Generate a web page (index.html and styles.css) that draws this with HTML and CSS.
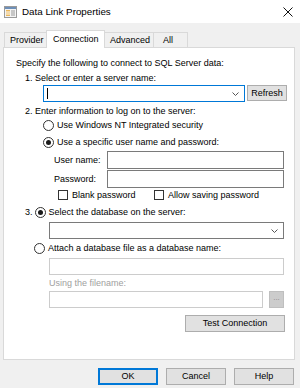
FILE: index.html
```html
<!doctype html>
<html lang="en">
  <head>
    <meta charset="UTF-8" />
    <meta name="viewport" content="width=device-width, initial-scale=1.0" />
    <title>Data Link Properties</title>
    <link rel="stylesheet" href="styles.css">
  </head>
  <body>
    <!-- Title bar -->
    <div class="titlebar">
      <svg class="app-icon" width="13" height="12" viewBox="0 0 13 12">
        <rect x="0.5" y="0.5" width="12" height="11" fill="#f4f4f4" stroke="#9a9a9a" />
        <rect x="1" y="1" width="11" height="2" fill="#6d8fb8" />
        <rect x="2" y="4" width="4" height="6" fill="#e9b65a" />
        <line x1="2" y1="6" x2="6" y2="6" stroke="#fff" />
        <line x1="2" y1="8" x2="6" y2="8" stroke="#fff" />
        <rect x="7" y="4" width="4" height="6" fill="#c7c7c7" />
      </svg>
      <span class="title">Data Link Properties</span>
      <svg class="close" width="10" height="10" viewBox="0 0 10 10">
        <line x1="0.5" y1="0.5" x2="9.5" y2="9.5" stroke="#111" />
        <line x1="9.5" y1="0.5" x2="0.5" y2="9.5" stroke="#111" />
      </svg>
    </div>

    <!-- Tabs -->
    <div class="tabs">
      <div class="tab tab-provider">Provider</div>
      <div class="tab tab-connection active">Connection</div>
      <div class="tab tab-advanced">Advanced</div>
      <div class="tab tab-all">All</div>
    </div>

    <!-- Connection page -->
    <div class="panel">
      <div class="line intro">Specify the following to connect to SQL Server data:</div>
      <div class="line step">1. Select or enter a server name:</div>

      <div class="server-row">
        <div class="combo focused">
          <span class="caret"></span>
          <svg class="chevron" width="7" height="4" viewBox="0 0 7 4">
            <polyline points="0.5,0.5 3.5,3.5 6.5,0.5" fill="none" stroke="#555" />
          </svg>
        </div>
        <div class="btn refresh">Refresh</div>
      </div>

      <div class="line step step-2">2. Enter information to log on to the server:</div>

      <div class="line option opt-nt">
        <span class="radio"></span>Use Windows NT Integrated security
      </div>
      <div class="line option opt-user">
        <span class="radio on"></span>Use a specific user name and password:
      </div>

      <div class="field-row user-row">
        <span class="field-label">User name:</span>
        <div class="textbox"></div>
      </div>
      <div class="field-row pass-row">
        <span class="field-label">Password:</span>
        <div class="textbox"></div>
      </div>

      <div class="line checks">
        <span class="check-item blank"><span class="checkbox"></span>Blank password</span>
        <span class="check-item"><span class="checkbox"></span>Allow saving password</span>
      </div>

      <div class="line option step-3">
        <span class="num">3.</span><span class="radio on"></span>Select the database on the server:
      </div>
      <div class="combo db-combo">
        <svg class="chevron" width="7" height="4" viewBox="0 0 7 4">
          <polyline points="0.5,0.5 3.5,3.5 6.5,0.5" fill="none" stroke="#555" />
        </svg>
      </div>

      <div class="line option opt-attach">
        <span class="radio"></span>Attach a database file as a database name:
      </div>
      <div class="textbox disabled attach-box"></div>
      <div class="line disabled-text file-label">Using the filename:</div>
      <div class="file-row">
        <div class="textbox disabled file-box"></div>
        <div class="btn browse">...</div>
      </div>

      <div class="test-row">
        <div class="btn test">Test Connection</div>
      </div>
    </div>

    <!-- Dialog buttons -->
    <div class="dialog-buttons">
      <div class="btn dlg default">OK</div>
      <div class="btn dlg">Cancel</div>
      <div class="btn dlg">Help</div>
    </div>
  </body>
</html>
```

FILE: styles.css
```css
* {
  margin: 0;
  padding: 0;
  box-sizing: border-box;
}

body {
  width: 300px;
  height: 388px;
  overflow: hidden;
  background: #f0f0f0;
  font-family: "Liberation Sans", Arial, sans-serif;
  font-size: 9px;
  color: #000;
}

/* Title bar */
.titlebar {
  height: 23px;
  background: #fff;
  display: flex;
  align-items: center;
  padding-left: 4px;
  padding-right: 7px;
}

.app-icon {
  margin-right: 5px;
}

.title {
  flex: 1;
  font-size: 9.8px;
}

/* Tabs */
.tabs {
  display: flex;
  align-items: flex-end;
  height: 17px;
  margin-top: 7px;
  padding-left: 4px;
}

.tab {
  height: 15px;
  line-height: 14px;
  border: 1px solid #d9d9d9;
  border-bottom: none;
  background: #f0f0f0;
  padding-left: 5px;
  margin-left: -1px;
  white-space: nowrap;
}

.tab-provider { width: 43px; margin-left: 0; }
.tab-connection { width: 59px; }
.tab-advanced { width: 50px; }
.tab-all { width: 35px; padding-left: 9px; }

.tab.active {
  height: 18px;
  line-height: 16px;
  background: #fff;
  position: relative;
  z-index: 2;
  margin-bottom: -1px;
  padding-left: 6px;
}

/* Page */
.panel {
  width: 292px;
  height: 313px;
  margin-left: 3px;
  background: #fff;
  border: 1px solid #d9d9d9;
  position: relative;
  z-index: 1;
}

.line {
  height: 12px;
  line-height: 12px;
  white-space: nowrap;
  display: flex;
  align-items: center;
}

.intro { margin: 9px 0 0 12px; }
.step { margin: 3px 0 0 21px; }
.step-2 { margin-top: 3px; }

.server-row {
  display: flex;
  align-items: flex-start;
  margin: 1px 0 0 39px;
  height: 17px;
}

.combo {
  height: 17px;
  border: 1px solid #7a7a7a;
  background: #fff;
  display: flex;
  align-items: center;
  justify-content: space-between;
  padding: 0 5px 0 3px;
}

.combo.focused {
  width: 202px;
  border-color: #0078d7;
}

.caret {
  width: 1px;
  height: 11px;
  background: #000;
}

.chevron {
  margin-left: auto;
}

.btn {
  height: 17px;
  line-height: 15px;
  text-align: center;
  background: #e1e1e1;
  border: 1px solid #adadad;
  white-space: nowrap;
}

.refresh {
  width: 40px;
  margin-left: 2px;
  height: 16px;
  line-height: 14px;
}

.option {
  margin-left: 39px;
}

.opt-nt { margin-top: 2px; }
.opt-user { margin-top: 5px; }

.radio {
  width: 11px;
  height: 11px;
  border: 1px solid #333;
  border-radius: 50%;
  background: #fff;
  display: inline-flex;
  align-items: center;
  justify-content: center;
  margin-right: 3px;
  flex-shrink: 0;
}

.radio.on::after {
  content: "";
  width: 5px;
  height: 5px;
  border-radius: 50%;
  background: #1a1a1a;
}

.field-row {
  display: flex;
  align-items: center;
  height: 18px;
  margin-left: 50px;
}

.user-row { margin-top: 3px; }
.pass-row { margin-top: 1px; }

.field-label {
  width: 53px;
}

.textbox {
  height: 18px;
  width: 177px;
  border: 1px solid #7a7a7a;
  background: #fff;
}

.textbox.disabled {
  border-color: #cccccc;
  height: 17px;
}

.checks {
  margin: 1px 0 0 54px;
}

.check-item {
  display: flex;
  align-items: center;
}

.check-item.blank {
  width: 96px;
}

.checkbox {
  width: 10px;
  height: 10px;
  border: 1px solid #333;
  background: #fff;
  margin-right: 4px;
}

.step-3 {
  margin: 5px 0 0 21px;
}

.num {
  margin-right: 2px;
}

.db-combo {
  width: 235px;
  margin: 4px 0 0 45px;
  border-color: #7a7a7a;
}

.opt-attach {
  margin: 3px 0 0 30px;
}

.attach-box {
  width: 235px;
  margin: 4px 0 0 45px;
}

.disabled-text {
  color: #a0a0a0;
}

.file-label {
  margin: 2px 0 0 45px;
}

.file-row {
  display: flex;
  margin: 2px 0 0 45px;
}

.file-box {
  width: 214px;
}

.browse {
  width: 15px;
  margin-left: 6px;
  background: #cccccc;
  border-color: #bfbfbf;
  color: #8a8a8a;
  line-height: 12px;
  font-size: 8px;
}

.test-row {
  display: flex;
  justify-content: flex-end;
  margin: 7px 9px 0 0;
}

.test {
  width: 100px;
}

/* Dialog buttons */
.dialog-buttons {
  display: flex;
  justify-content: flex-end;
  gap: 8px;
  margin: 8px 6px 0 0;
}

.dlg {
  width: 60px;
  height: 17px;
}

.dlg.default {
  border: 2px solid #0078d7;
  line-height: 13px;
}
```
